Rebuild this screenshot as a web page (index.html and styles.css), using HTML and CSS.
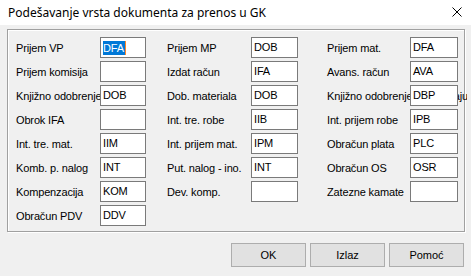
FILE: index.html
```html
<!DOCTYPE html>
<html lang="sr">
<head>
  <meta charset="UTF-8">
  <title>Podešavanje vrsta dokumenta za prenos u GK</title>
  <link rel="stylesheet" href="styles.css">
</head>
<body>

  <div class="window">
    <div class="titlebar">
      <span class="title">Podešavanje vrsta dokumenta za prenos u GK</span>
      <svg class="close" width="10" height="10" viewBox="0 0 10 10">
        <path d="M0.5 0.5 L9.5 9.5 M9.5 0.5 L0.5 9.5" stroke="#000" stroke-width="1" fill="none"/>
      </svg>
    </div>

    <div class="content">
      <div class="panel">
        <div class="grid">
          <div class="col col-1">
            <div class="field"><span class="label">Prijem VP</span><span class="input"><span class="selected">DFA</span><span class="caret"></span></span></div>
            <div class="field"><span class="label">Prijem komisija</span><span class="input"></span></div>
            <div class="field"><span class="label">Knjižno odobrenje</span><span class="input">DOB</span></div>
            <div class="field"><span class="label">Obrok IFA</span><span class="input"></span></div>
            <div class="field"><span class="label">Int. tre. mat.</span><span class="input">IIM</span></div>
            <div class="field"><span class="label">Komb. p. nalog</span><span class="input">INT</span></div>
            <div class="field"><span class="label">Kompenzacija</span><span class="input">KOM</span></div>
            <div class="field"><span class="label">Obračun PDV</span><span class="input">DDV</span></div>
          </div>

          <div class="col col-2">
            <div class="field"><span class="label">Prijem MP</span><span class="input">DOB</span></div>
            <div class="field"><span class="label">Izdat račun</span><span class="input">IFA</span></div>
            <div class="field"><span class="label">Dob. materiala</span><span class="input">DOB</span></div>
            <div class="field"><span class="label">Int. tre. robe</span><span class="input">IIB</span></div>
            <div class="field"><span class="label">Int. prijem mat.</span><span class="input">IPM</span></div>
            <div class="field"><span class="label">Put. nalog - ino.</span><span class="input">INT</span></div>
            <div class="field"><span class="label">Dev. komp.</span><span class="input"></span></div>
          </div>

          <div class="col col-3">
            <div class="field"><span class="label">Prijem mat.</span><span class="input">DFA</span></div>
            <div class="field"><span class="label">Avans. račun</span><span class="input">AVA</span></div>
            <div class="field"><span class="label"><span class="label-long">Knjižno odobrenje u izvještaju</span></span><span class="input">DBP</span></div>
            <div class="field"><span class="label">Int. prijem robe</span><span class="input">IPB</span></div>
            <div class="field"><span class="label">Obračun plata</span><span class="input">PLC</span></div>
            <div class="field"><span class="label">Obračun OS</span><span class="input">OSR</span></div>
            <div class="field"><span class="label">Zatezne kamate</span><span class="input"></span></div>
          </div>
        </div>
      </div>

      <div class="buttons">
        <button class="btn">OK</button>
        <button class="btn">Izlaz</button>
        <button class="btn">Pomoć</button>
      </div>
    </div>
  </div>

</body>
</html>
```

FILE: styles.css
```css
body {
  margin: 0;
  padding: 0;
  background: #f0f0f0;
  font-family: 'Liberation Sans', Arial, sans-serif;
  color: #000;
}

.window {
  width: 471px;
  height: 276px;
  overflow: hidden;
}

.titlebar {
  height: 25px;
  background: #fff;
  display: flex;
  align-items: center;
  justify-content: space-between;
  padding: 0 9px 0 8px;
}

.title {
  font-family: 'Noto Sans', 'Open Sans', sans-serif;
  font-size: 12px;
  margin-top: -1px;
}

.close {
  display: block;
  margin-top: -1px;
}

.content {
  padding: 4px 6px 0 7px;
}

.panel {
  border: 1px solid #a0a0a0;
  box-shadow: inset 1px 1px 0 #fff, 1px 1px 0 #fff;
  padding: 7px 0 5px 8px;
}

.grid {
  display: grid;
  grid-template-columns: 151px 160px 1fr;
}

.col {
  display: flex;
  flex-direction: column;
  gap: 3px;
}

.field {
  display: flex;
  align-items: center;
  height: 21px;
  font-size: 11px;
  letter-spacing: -0.15px;
}

.label {
  flex: 0 0 84px;
  width: 84px;
  white-space: nowrap;
  overflow: visible;
}

.col-3 .label {
  flex-basis: 83px;
  width: 83px;
}

.label-long {
  display: block;
  width: 140px;
  overflow: hidden;
}

.input {
  position: relative;
  z-index: 1;
  box-sizing: border-box;
  width: 46px;
  height: 21px;
  border: 1px solid #7a7a7a;
  background: #fff;
  padding: 0 0 0 2px;
  line-height: 19px;
  display: flex;
  align-items: center;
  flex-shrink: 0;
}

.col-2 .input {
  width: 47px;
}

.col-3 .input {
  width: 48px;
}

.selected {
  background: #0078d7;
  color: #fff;
  line-height: 14px;
  padding-right: 1px;
}

.caret {
  display: inline-block;
  width: 1px;
  height: 14px;
  background: #ff8728;
}

.buttons {
  display: flex;
  justify-content: flex-end;
  gap: 4px;
  margin-top: 11px;
  padding-right: 1px;
}

.btn {
  width: 75px;
  height: 24px;
  background: #e1e1e1;
  border: 1px solid #adadad;
  font-family: 'Liberation Sans', Arial, sans-serif;
  font-size: 11px;
  color: #000;
  padding: 0;
}
```
